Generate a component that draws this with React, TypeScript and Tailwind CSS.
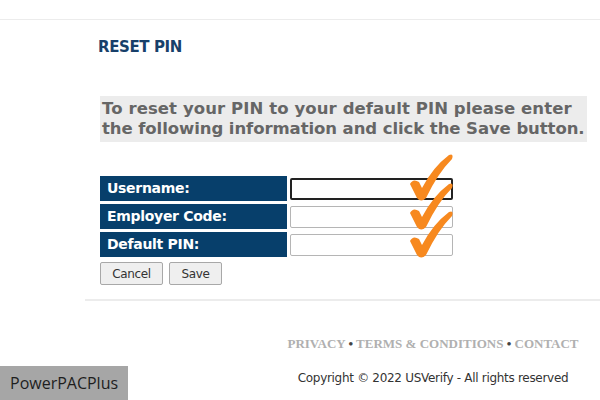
function Check() {
  return (
    <svg width="46" height="48" viewBox="0 0 46 48" className="absolute">
      <path
        d="M1 30 Q4 24 10 28 L13 34 Q24 13 40 1 Q45 -1 43 5 Q29 19 17 44 Q12 49 8 44 Z"
        fill="#f7891f"
      />
    </svg>
  );
}

const rows = ["Username:", "Employer Code:", "Default PIN:"];

export default function App() {
  return (
    <div className="w-[600px] h-[400px] bg-white relative overflow-hidden font-['DejaVu_Sans',sans-serif]">
      {/* top rule */}
      <div className="h-[20px] border-b border-[#ececec]" />

      <div className="pl-[98px] pt-[18px]">
        <h1 className="text-[15px] font-bold text-[#17406a] leading-[18px] tracking-[-0.4px]">RESET PIN</h1>
      </div>

      {/* instructions */}
      <div className="ml-[100px] mt-[40px] mr-[13px] bg-[#ececec] px-[2px] py-[3px]">
        <p className="text-[16.5px] font-bold text-[#666666] leading-[20px] whitespace-nowrap">
          <span className="block tracking-[0.09px]">To reset your PIN to your default PIN please enter</span>
          <span className="block tracking-[-0.08px]">the following information and click the Save button.</span>
        </p>
      </div>

      {/* form */}
      <div className="ml-[100px] mt-[34px] relative">
        <div className="flex flex-col gap-[3px]">
          {rows.map((r) => (
            <div key={r} className="flex items-center gap-[3px] h-[25px]">
              <div className="w-[187px] h-full bg-[#073f6b] text-white font-bold text-[14px] flex items-center pl-[7px] tracking-[-0.3px]">
                {r}
              </div>
              <input
                className={
                  "w-[163px] h-[22px] bg-white rounded-[2px] outline-none " +
                  (r === "Username:" ? "border-2 border-[#222]" : "border border-[#b5b5b5]")
                }
              />
            </div>
          ))}
        </div>
        <div className="flex gap-[6px] mt-[5px]">
          <button className="w-[63px] h-[23px] bg-[#efefef] border border-[#a8a8a8] rounded-[2px] text-[12px] text-[#333] tracking-[-0.4px]">
            Cancel
          </button>
          <button className="w-[53px] h-[23px] bg-[#efefef] border border-[#a8a8a8] rounded-[2px] text-[12px] text-[#333] tracking-[-0.4px]">
            Save
          </button>
        </div>
        <div className="absolute left-[309px] top-[-22px]"><Check /></div>
        <div className="absolute left-[309px] top-[7px]"><Check /></div>
        <div className="absolute left-[309px] top-[35px]"><Check /></div>
      </div>

      {/* divider */}
      <div className="ml-[85px] mt-[14px] border-t-2 border-[#ececec]" />

      {/* footer */}
      <div className="ml-[266px] mt-[35px] text-center">
        <div className="text-[13px] font-bold text-[#b0b0b0] font-['Liberation_Serif',serif] leading-[16px]">
          PRIVACY <span className="text-[#444]">•</span> TERMS &amp; CONDITIONS <span className="text-[#444]">•</span> CONTACT
        </div>
        <div className="mt-[18px] text-[12px] text-[#333] leading-[16px] tracking-[-0.3px]">
          Copyright © 2022 USVerify - All rights reserved
        </div>
      </div>

      <div className="absolute left-0 bottom-0 w-[128px] h-[34px] bg-[#a6a6a6] flex items-center pl-[10px] font-['Open_Sans',sans-serif] text-[16px] text-[#1e1e1e]">
        PowerPACPlus
      </div>
    </div>
  );
}
